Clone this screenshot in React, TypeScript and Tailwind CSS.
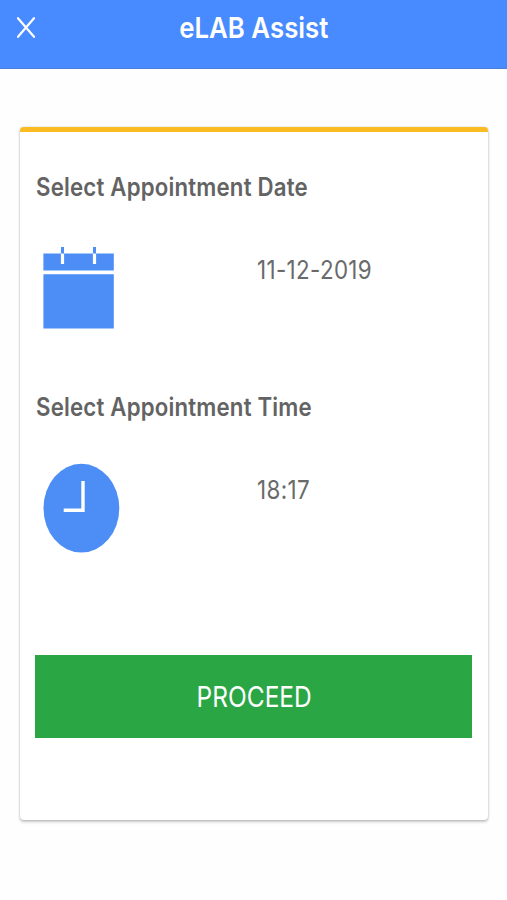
import type { ReactNode } from "react";

function CalendarIcon() {
  return (
    <svg className="mt-11" width="71" height="82" viewBox="0 0 71 82" fill="none" aria-hidden="true">
      <path d="M0.4 6.5h70.4v17H0.4zM0.4 27.3h70.4v54.2H0.4z" fill="#4c8df6" />
      <path d="M19.5 0v7M51.5 0v7" stroke="#4c8df6" strokeWidth="3" />
      <path d="M19.5 6.5v10.5M51.5 6.5v10.5" stroke="#fff" strokeWidth="3.2" />
    </svg>
  );
}

function ClockIcon() {
  return (
    <svg className="mt-10" width="77" height="90" viewBox="0 0 77 90" fill="none" aria-hidden="true">
      <ellipse cx="38.4" cy="45.2" rx="37.9" ry="44.4" fill="#4c8df6" />
      <path d="M40 18v29.2H20.7" stroke="#fff" strokeWidth="3.4" />
    </svg>
  );
}

function Row({ title, icon, value }: { title: string; icon: ReactNode; value: string }) {
  return (
    <section className="h-[220px]">
      <h2 className="ml-px h-8 w-max origin-left scale-x-[0.89] text-[25px] leading-8 font-semibold tracking-[0.008em] text-[#636363]">
        {title}
      </h2>
      <div className="flex pl-2">
        <div className="w-[214px]">{icon}</div>
        <span className="mt-[51px] h-8 w-max origin-left scale-x-[0.86] text-[26px] leading-8 tracking-[0.016em] text-[#6a6a6a]">
          {value}
        </span>
      </div>
    </section>
  );
}

export default function App() {
  return (
    <div className="h-[900px] w-full overflow-hidden bg-[#fefefe] font-['Inter',sans-serif]">
      {/* Header */}
      <header className="grid h-[69px] grid-cols-[1fr_auto_1fr] border-b border-[#4a80d8] bg-[#488aff] text-white">
        <button aria-label="Close" className="mt-[17px] ml-[17px] h-[21px] w-[18px]">
          <svg width="18" height="21" viewBox="0 0 18 21" fill="none">
            <path d="M1 1.2l16 18.6M17 1.2L1 19.8" stroke="#fff" strokeWidth="2.2" strokeLinecap="round" />
          </svg>
        </button>
        <h1 className="mt-2.5 h-9 scale-x-[0.89] text-[29px] leading-9 font-semibold">eLAB Assist</h1>
      </header>

      {/* Appointment card */}
      <main className="mr-[19px] ml-5 mt-[58px] h-[693px] rounded-[4px] border-t-[5px] border-[#fbbc23] bg-white pt-[39px] pr-4 pl-[15px] shadow-[0_2px_3px_rgba(0,0,0,0.22),0_0_2px_rgba(0,0,0,0.2)]">
        <Row title="Select Appointment Date" icon={<CalendarIcon />} value="11-12-2019" />
        <Row title="Select Appointment Time" icon={<ClockIcon />} value="18:17" />
        <button className="mt-11 flex h-[83px] w-full items-center justify-center bg-[#2aa645] text-white">
          <span className="ml-px scale-x-[0.845] text-[29px] leading-9">PROCEED</span>
        </button>
      </main>
    </div>
  );
}
